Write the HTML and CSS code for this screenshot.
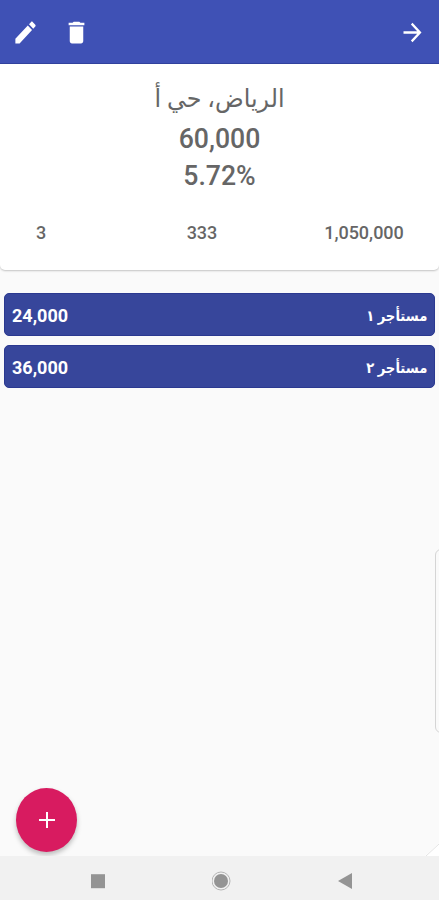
FILE: index.html
```html
<!DOCTYPE html>
<html lang="ar" dir="rtl">
<head>
  <meta charset="UTF-8" />
  <title>الرياض، حي أ</title>
  <link rel="stylesheet" href="styles.css">
</head>
<body>
  <header class="toolbar">
    <button class="icon-btn back-btn">
      <svg viewBox="0 0 24 24" preserveAspectRatio="none"><path d="M12 4l-1.41 1.41L16.17 11H4v2h12.17l-5.58 5.59L12 20l8-8z"/></svg>
    </button>
    <div class="toolbar-actions">
      <button class="icon-btn">
        <svg viewBox="0 0 24 24" preserveAspectRatio="none"><path d="M6 19c0 1.1.9 2 2 2h8c1.1 0 2-.9 2-2V7H6v12zM19 4h-3.5l-1-1h-5l-1 1H5v2h14V4z"/></svg>
      </button>
      <button class="icon-btn">
        <svg viewBox="0 0 24 24" preserveAspectRatio="none"><path d="M3 17.25V21h3.75L17.81 9.94l-3.75-3.75L3 17.25zM20.71 7.04c.39-.39.39-1.02 0-1.41l-2.34-2.34c-.39-.39-1.02-.39-1.41 0l-1.83 1.83 3.75 3.75 1.83-1.83z"/></svg>
      </button>
    </div>
  </header>

  <main class="content">
    <section class="summary">
      <h1 class="title">الرياض، حي أ</h1>
      <p class="figure">60,000</p>
      <p class="figure" dir="ltr">5.72%</p>
      <div class="stats">
        <span>1,050,000</span>
        <span>333</span>
        <span class="stat-last">3</span>
      </div>
    </section>

    <ul class="tenants">
      <li class="tenant">
        <span class="tenant-name">مستأجر ١</span>
        <span class="tenant-rent">24,000</span>
      </li>
      <li class="tenant">
        <span class="tenant-name">مستأجر ٢</span>
        <span class="tenant-rent">36,000</span>
      </li>
    </ul>

    <div class="edge-panel"></div>
    <svg class="corner" viewBox="0 0 14 14"><path d="M0 14L14 1V14z" fill="#fff"/><path d="M1 14L14 2" stroke="#e4e4e4" fill="none"/></svg>
    <button class="fab">
      <svg viewBox="0 0 16 16"><path d="M8 0v16M0 8h16"/></svg>
    </button>
  </main>

  <nav class="navbar" dir="ltr">
    <svg viewBox="0 0 20 20"><rect x="3" y="3.2" width="14" height="14"/></svg>
    <svg viewBox="0 0 20 20"><circle cx="9" cy="10" r="7"/><circle class="ring" cx="9" cy="10" r="9"/></svg>
    <svg viewBox="0 0 20 20"><path d="M3 10L17 2V18z"/></svg>
  </nav>
</body>
</html>
```

FILE: styles.css
```css
* {
  box-sizing: border-box;
}

body {
  margin: 0;
  height: 900px;
  display: flex;
  flex-direction: column;
  background: #fafafa;
  font-family: Roboto, "DejaVu Sans", sans-serif;
  overflow: hidden;
}

button {
  border: none;
  padding: 0;
  cursor: pointer;
}

.toolbar {
  height: 64px;
  padding: 1px 13px 0 12px;
  display: flex;
  align-items: center;
  justify-content: space-between;
  background: #3f51b5;
  border-bottom: 1px solid #32429f;
}

.toolbar-actions {
  display: flex;
  gap: 24px;
}

.icon-btn {
  width: 27px;
  height: 29px;
  background: none;
}

.icon-btn svg {
  display: block;
  width: 100%;
  height: 100%;
  fill: #fff;
}

.content {
  position: relative;
  flex: 1;
}

.summary {
  height: 206px;
  padding-top: 16px;
  background: #fff;
  border-radius: 0 0 5px 5px;
  box-shadow: 0 1px 2px rgba(0,0,0,0.22);
  color: #666;
  text-align: center;
}

.title {
  margin: 0;
  height: 40px;
  font-size: 25px;
  line-height: 38px;
  font-weight: 400;
  transform: scaleX(0.95);
}

.figure {
  margin: 0;
  font-size: 28px;
  line-height: 37px;
  font-weight: 500;
  transform: scaleX(0.95);
}

.stats {
  margin-top: 27px;
  display: grid;
  grid-template-columns: 150px 174px 1fr;
  font-size: 18px;
  line-height: 24px;
  font-weight: 500;
}

.stat-last {
  padding-right: 33px;
}

.tenants {
  list-style: none;
  margin: 23px 4px 0;
  padding: 0;
  display: flex;
  flex-direction: column;
  gap: 9px;
}

.tenant {
  height: 43px;
  padding: 2px 7px 0;
  display: flex;
  align-items: center;
  justify-content: space-between;
  background: #37469b;
  border: 1px solid #2b3990;
  border-radius: 5px;
  color: #fff;
  font-weight: 700;
}

.tenant-name {
  font-size: 15px;
  transform: scaleX(0.88);
  transform-origin: right;
}

.tenant-rent {
  font-size: 18px;
}

/* drawer handle, mostly off screen */
.edge-panel {
  position: absolute;
  right: -8px;
  top: 485px;
  width: 12px;
  height: 184px;
  border: 1px solid #d5d5d5;
  border-radius: 6px;
}

.corner {
  position: absolute;
  right: 0;
  bottom: 0;
  width: 14px;
  height: 14px;
}

.fab {
  position: absolute;
  left: 16px;
  bottom: 4px;
  width: 61px;
  height: 64px;
  display: flex;
  align-items: center;
  justify-content: center;
  background: #d81b60;
  border-radius: 50%;
  box-shadow: 0 3px 5px rgba(0,0,0,0.25);
}

.fab svg {
  width: 16px;
  height: 16px;
  stroke: #fff;
  stroke-width: 2;
}

.navbar {
  position: relative;
  height: 44px;
  padding: 5px 84px 0 88px;
  display: flex;
  align-items: center;
  justify-content: space-between;
  background: #f1f1f1;
}

.navbar svg {
  width: 20px;
  height: 20px;
  fill: #949494;
}

.navbar .ring {
  fill: none;
  stroke: #b5b5b5;
}
```
